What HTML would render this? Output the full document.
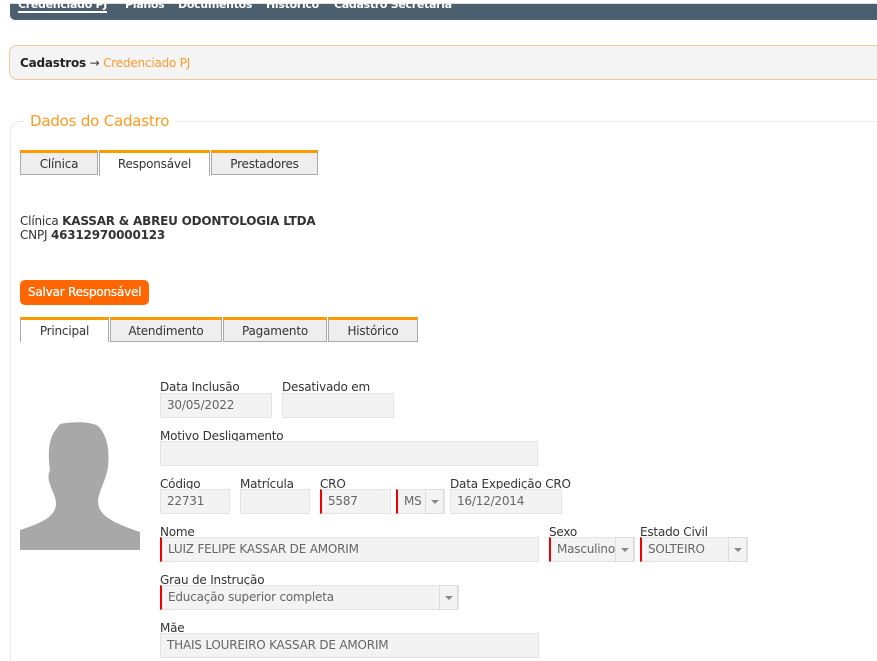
<!DOCTYPE html>
<html><head><meta charset="utf-8"><style>
*{box-sizing:border-box;margin:0;padding:0}
body{width:877px;height:643px;overflow:hidden;background:#fff;font-family:"DejaVu Sans","Liberation Sans",sans-serif;font-size:11px;color:#333;position:relative;letter-spacing:-0.2px}
.a{position:absolute;white-space:nowrap}
.nav{left:10px;top:3px;width:880px;height:17px;background:#4b5f6e;border-radius:0 0 0 5px;border-top:1px solid #ddd}
.nav span{position:absolute;top:-6px;color:#fff;font-weight:bold;font-size:11px;letter-spacing:-0.3px}
.bc{left:9px;top:45px;width:880px;height:35px;background:#f4f4f4;border:1px solid #f0c89a;border-radius:8px}
.fs{left:10px;top:121px;width:880px;height:540px;border:1px solid #e8e8e8;border-right:none;border-bottom:none;border-radius:10px 0 0 0}
.tab{position:absolute;height:25px;background:#eee;border:1px solid #aaa;border-top:3px solid #ff9900;text-align:center;line-height:22px;font-size:12px;color:#333}
.tab.on{background:#fff;border-bottom:none}
.lb{position:absolute;font-size:12px;color:#333}
.in{position:absolute;height:25px;background:#f3f3f3;border:1px solid #e3e3e3;font-size:12px;color:#666;padding-left:6px;line-height:23px}
.r{border-left:2px solid #e00}
.dd{position:absolute;right:0;top:-1px;width:19px;height:25px;border:1px solid #ddd;background:#f3f3f3}
.dd:after{content:"";position:absolute;left:5px;top:10px;border:4px solid transparent;border-top:4px solid #888}
</style></head><body>
<div class="a nav"><span style="left:8px;border-bottom:2px solid #fff;">Credenciado PJ</span><span style="left:115px">Planos</span><span style="left:168px">Documentos</span><span style="left:256px">Histórico</span><span style="left:324px">Cadastro Secretaria</span></div>
<div class="a bc"><span class="a" style="left:10px;top:10px;font-size:12px"><b style="color:#222">Cadastros</b> → <span style="color:#ff9a2e">Credenciado PJ</span></span></div>
<div class="a fs"></div>
<div class="a" style="left:24px;top:112px;background:#fff;padding:0 6px;font-size:15px;color:#ff9a1e">Dados do Cadastro</div>
<div class="tab" style="left:20px;top:150px;width:78px">Clínica</div>
<div class="tab on" style="left:99px;top:150px;width:111px;height:26px">Responsável</div>
<div class="tab" style="left:211px;top:150px;width:107px">Prestadores</div>
<div class="a" style="left:20px;top:214px;font-size:12px;line-height:14px">Clínica <b>KASSAR &amp; ABREU ODONTOLOGIA LTDA</b><br>CNPJ <b>46312970000123</b></div>
<div class="a" style="left:20px;top:280px;width:129px;height:25px;background:#ff6600;border-radius:5px;color:#fff;font-size:12px;line-height:25px;text-align:center;text-shadow:0.3px 0 0 #fff">Salvar Responsável</div>
<div class="tab on" style="left:20px;top:317px;width:89px;height:25px">Principal</div>
<div class="tab" style="left:110px;top:317px;width:112px">Atendimento</div>
<div class="tab" style="left:223px;top:317px;width:104px">Pagamento</div>
<div class="tab" style="left:328px;top:317px;width:90px">Histórico</div>
<svg class="a" style="left:20px;top:422px" width="120" height="128" viewBox="0 0 120 128"><path fill="#a8a8a8" d="M40 2 C55 -1 72 0 78 4 C86 12 90 25 88 45 C86 58 80 66 78 78 C78 90 84 98 120 110 L120 128 L0 128 L0 108 C25 100 35 94 36 82 C36 74 32 70 30 62 C28 58 28 52 30 48 C28 35 28 20 34 10 Z"/></svg>
<div class="lb" style="left:160px;top:380px">Data Inclusão</div>
<div class="lb" style="left:282px;top:380px">Desativado em</div>
<div class="in" style="left:160px;top:393px;width:112px">30/05/2022</div>
<div class="in" style="left:282px;top:393px;width:112px"></div>
<div class="lb" style="left:160px;top:429px">Motivo Desligamento</div>
<div class="in" style="left:160px;top:441px;width:378px"></div>
<div class="lb" style="left:160px;top:477px">Código</div>
<div class="lb" style="left:240px;top:477px">Matrícula</div>
<div class="lb" style="left:320px;top:477px">CRO</div>
<div class="lb" style="left:450px;top:477px">Data Expedição CRO</div>
<div class="in" style="left:160px;top:489px;width:70px">22731</div>
<div class="in" style="left:240px;top:489px;width:70px"></div>
<div class="in r" style="left:320px;top:489px;width:71px">5587</div>
<div class="in r" style="left:396px;top:489px;width:49px">MS<div class="dd"></div></div>
<div class="in" style="left:450px;top:489px;width:112px">16/12/2014</div>
<div class="lb" style="left:160px;top:525px">Nome</div>
<div class="lb" style="left:549px;top:525px">Sexo</div>
<div class="lb" style="left:640px;top:525px">Estado Civil</div>
<div class="in r" style="left:160px;top:537px;width:379px">LUIZ FELIPE KASSAR DE AMORIM</div>
<div class="in r" style="left:549px;top:537px;width:86px">Masculino<div class="dd"></div></div>
<div class="in r" style="left:640px;top:537px;width:108px">SOLTEIRO<div class="dd"></div></div>
<div class="lb" style="left:160px;top:573px">Grau de Instrução</div>
<div class="in r" style="left:160px;top:585px;width:299px">Educação superior completa<div class="dd"></div></div>
<div class="lb" style="left:160px;top:621px">Mãe</div>
<div class="in" style="left:160px;top:633px;width:379px">THAIS LOUREIRO KASSAR DE AMORIM</div>
</body></html>
